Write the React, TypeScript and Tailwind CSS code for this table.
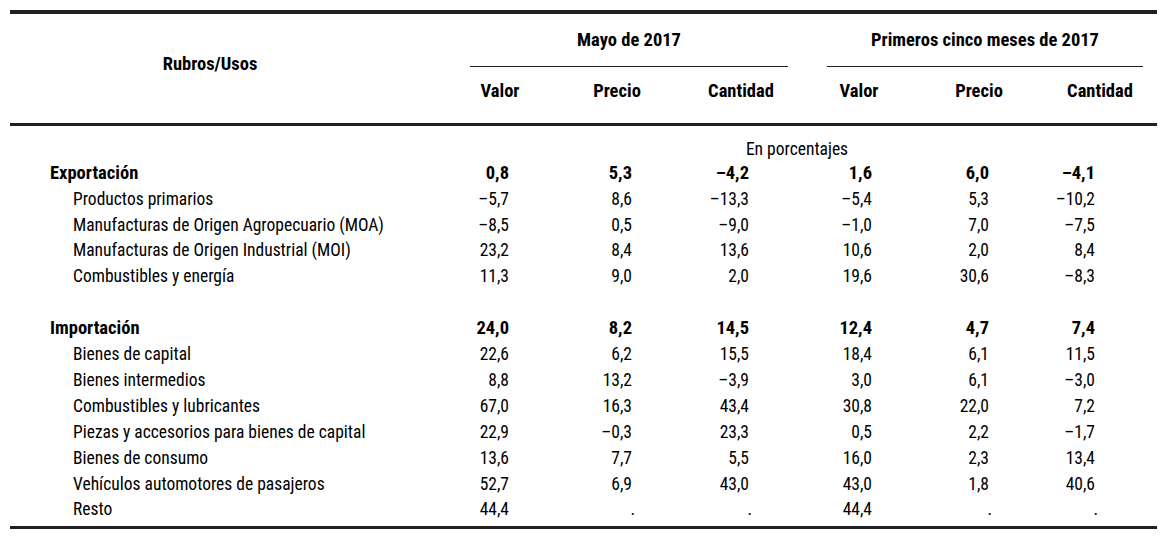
import React from "react";

type Row = { label: string; vals: string[]; bold?: boolean; sub?: boolean };

const block1: Row[] = [
  { label: "Exportación", vals: ["0,8", "5,3", "–4,2", "1,6", "6,0", "–4,1"], bold: true },
  { label: "Productos primarios", vals: ["–5,7", "8,6", "–13,3", "–5,4", "5,3", "–10,2"], sub: true },
  { label: "Manufacturas de Origen Agropecuario (MOA)", vals: ["–8,5", "0,5", "–9,0", "–1,0", "7,0", "–7,5"], sub: true },
  { label: "Manufacturas de Origen Industrial (MOI)", vals: ["23,2", "8,4", "13,6", "10,6", "2,0", "8,4"], sub: true },
  { label: "Combustibles y energía", vals: ["11,3", "9,0", "2,0", "19,6", "30,6", "–8,3"], sub: true },
];

const block2: Row[] = [
  { label: "Importación", vals: ["24,0", "8,2", "14,5", "12,4", "4,7", "7,4"], bold: true },
  { label: "Bienes de capital", vals: ["22,6", "6,2", "15,5", "18,4", "6,1", "11,5"], sub: true },
  { label: "Bienes intermedios", vals: ["8,8", "13,2", "–3,9", "3,0", "6,1", "–3,0"], sub: true },
  { label: "Combustibles y lubricantes", vals: ["67,0", "16,3", "43,4", "30,8", "22,0", "7,2"], sub: true },
  { label: "Piezas y accesorios para bienes de capital", vals: ["22,9", "–0,3", "23,3", "0,5", "2,2", "–1,7"], sub: true },
  { label: "Bienes de consumo", vals: ["13,6", "7,7", "5,5", "16,0", "2,3", "13,4"], sub: true },
  { label: "Vehículos automotores de pasajeros", vals: ["52,7", "6,9", "43,0", "43,0", "1,8", "40,6"], sub: true },
  { label: "Resto", vals: ["44,4", ".", ".", "44,4", ".", "."], sub: true },
];

const grid = "grid grid-cols-[431px_118px_116px_132px_104px_136px_106px]";
const pr = ["pr-[50px]", "pr-[43px]", "pr-[58px]", "pr-[39px]", "pr-[58px]", "pr-[58px]"];
const prDot = ["pr-[47px]", "pr-[40px]", "pr-[55px]", "pr-[36px]", "pr-[55px]", "pr-[55px]"];

function DataRow({ r }: { r: Row }) {
  return (
    <div className={`${grid} h-[25.85px] items-center ${r.bold ? "font-bold text-[18.5px]" : ""}`}>
      <div className={r.sub ? "pl-[63px]" : "pl-[40px]"}>{r.label}</div>
      {r.vals.map((v, i) => (
        <div key={i} className={`text-right ${v === "." ? prDot[i] : pr[i]}`}>
          {v}
        </div>
      ))}
    </div>
  );
}

export default function App() {
  return (
    <div className="w-[1166px] h-[538px] bg-white pt-[10px] pl-[10px] text-black text-[17.5px] leading-[22px] font-[family-name:'Liberation_Sans_Narrow','Arial_Narrow','Roboto_Condensed',sans-serif]">
      <div className="w-[1147px]">
        <div className="h-[4px] bg-[#231f20]" />
        {/* header */}
        <div className={`${grid} grid-rows-[52px_1px_56px] font-bold text-[18.5px]`}>
          <div className="row-span-3 flex items-center justify-center pr-[31px] pb-[10px]">Rubros/Usos</div>
          <div className="col-span-3 flex items-center justify-center ml-[29px] mr-[19px]">Mayo de 2017</div>
          <div className="col-span-3 flex items-center justify-center ml-[20px] mr-[10px]">Primeros cinco meses de 2017</div>
          <div className="col-span-3 bg-[#231f20] ml-[29px] mr-[19px]" />
          <div className="col-span-3 bg-[#231f20] ml-[20px] mr-[10px]" />
          {["Valor", "Precio", "Cantidad", "Valor", "Precio", "Cantidad"].map((h, i) => (
            <div key={i} className="flex items-center justify-center pb-[8px]">
              {h}
            </div>
          ))}
        </div>
        <div className="h-[3px] bg-[#231f20]" />
        {/* body */}
        <div className={`${grid} h-[34px] items-center pt-[12px]`}>
          <div />
          <div className="col-span-6 text-center">En porcentajes</div>
        </div>
        {block1.map((r, i) => (
          <DataRow key={i} r={r} />
        ))}
        <div className="h-[26.3px]" />
        {block2.map((r, i) => (
          <DataRow key={i} r={r} />
        ))}
        <div className="h-[3.6px]" />
        <div className="h-[3px] bg-[#231f20]" />
      </div>
    </div>
  );
}
